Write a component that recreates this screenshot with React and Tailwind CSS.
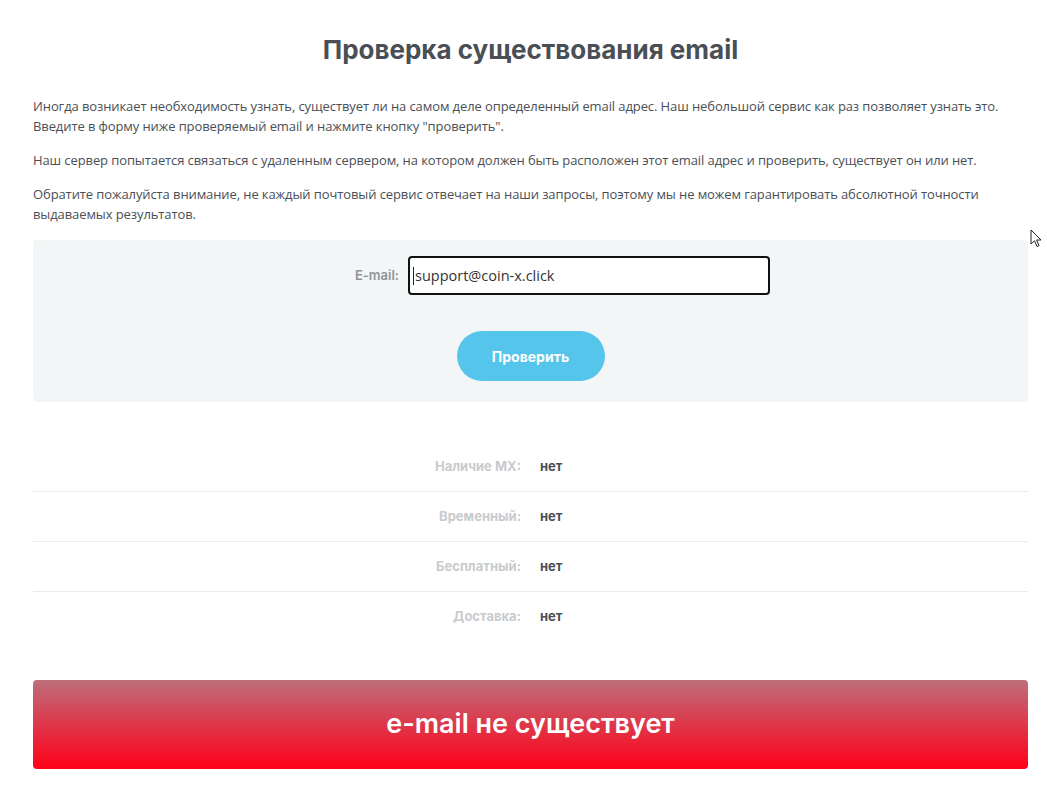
import React from "react";

const rows = [
  ["Наличие MX:", "нет"],
  ["Временный:", "нет"],
  ["Бесплатный:", "нет"],
  ["Доставка:", "нет"],
];

export default function App() {
  return (
    <div className="relative min-h-[792px] bg-white text-[#4a4f56]" style={{ fontFamily: '"Open Sans", Lato, sans-serif' }}>
      <div className="mx-[33px] w-[995px] pt-[35px]">
        <h1 className="text-center text-[26px] font-bold text-[#4a4f56] leading-[30px]" style={{ fontFamily: 'Inter, "Open Sans", sans-serif' }}>
          Проверка существования email
        </h1>
        <div className="mt-[31px] text-[13px] leading-[20px] tracking-[-0.1px]">
          <p>
            Иногда возникает необходимость узнать, существует ли на самом деле определенный email адрес. Наш небольшой сервис как раз позволяет узнать это.
            <br />
            Введите в форму ниже проверяемый email и нажмите кнопку "проверить".
          </p>
          <p className="mt-[14px]">
            Наш сервер попытается связаться с удаленным сервером, на котором должен быть расположен этот email адрес и проверить, существует он или нет.
          </p>
          <p className="mt-[14px]">
            Обратите пожалуйста внимание, не каждый почтовый сервис отвечает на наши запросы, поэтому мы не можем гарантировать абсолютной точности
            <br />
            выдаваемых результатов.
          </p>
        </div>

        <div className="mt-[16px] h-[162px] rounded-[4px] bg-[#f3f6f7] pt-[16px]">
          <div className="flex items-center">
            <label className="w-[375px] pr-[9px] text-right text-[13px] font-semibold text-[#8f9396]" style={{ fontFamily: 'Inter, "Open Sans", sans-serif' }}>
              E-mail:
            </label>
            <div className="flex h-[39px] w-[362px] items-center rounded-[4px] border-2 border-[#111] bg-white pl-[3px] text-[14.5px] text-[#333]">
              <span className="mr-[1px] inline-block h-[18px] w-[1px] bg-[#222]" />
              support@coin-x.click
            </div>
          </div>
          <div className="mt-[36px] flex justify-center">
            <button className="h-[50px] w-[148px] rounded-full bg-[#55c5ec] text-[14px] font-bold text-white" style={{ fontFamily: 'Inter, "Open Sans", sans-serif' }}>
              Проверить
            </button>
          </div>
        </div>

        <div className="mt-[40px]" style={{ fontFamily: 'Inter, "Open Sans", sans-serif' }}>
          {rows.map(([k, v], i) => (
            <div key={k} className={`flex h-[50px] items-center ${i < rows.length - 1 ? "border-b border-[#e8eaeb]" : ""}`}>
              <div className="w-[488px] text-right text-[13px] font-bold text-[#c8cbce]">{k}</div>
              <div className="pl-[19px] text-[13px] font-bold text-[#4a4f56]">{v}</div>
            </div>
          ))}
        </div>

        <div
          className="mt-[38px] flex h-[89px] items-center justify-center rounded-[4px] text-[27px] font-semibold text-white"
          style={{ background: "linear-gradient(to bottom, #bd6e7a, #ff0019)", fontFamily: 'Inter, "Open Sans", sans-serif' }}
        >
          e-mail не существует
        </div>
      </div>

      <svg className="absolute left-[1030px] top-[229px]" width="13" height="20" viewBox="0 0 13 20">
        <path d="M1 1 L1 15 L4.5 11.8 L7 17.5 L9 16.6 L6.6 11 L11 11 Z" fill="white" stroke="#222" strokeWidth="1" strokeLinejoin="round" />
      </svg>
    </div>
  );
}
